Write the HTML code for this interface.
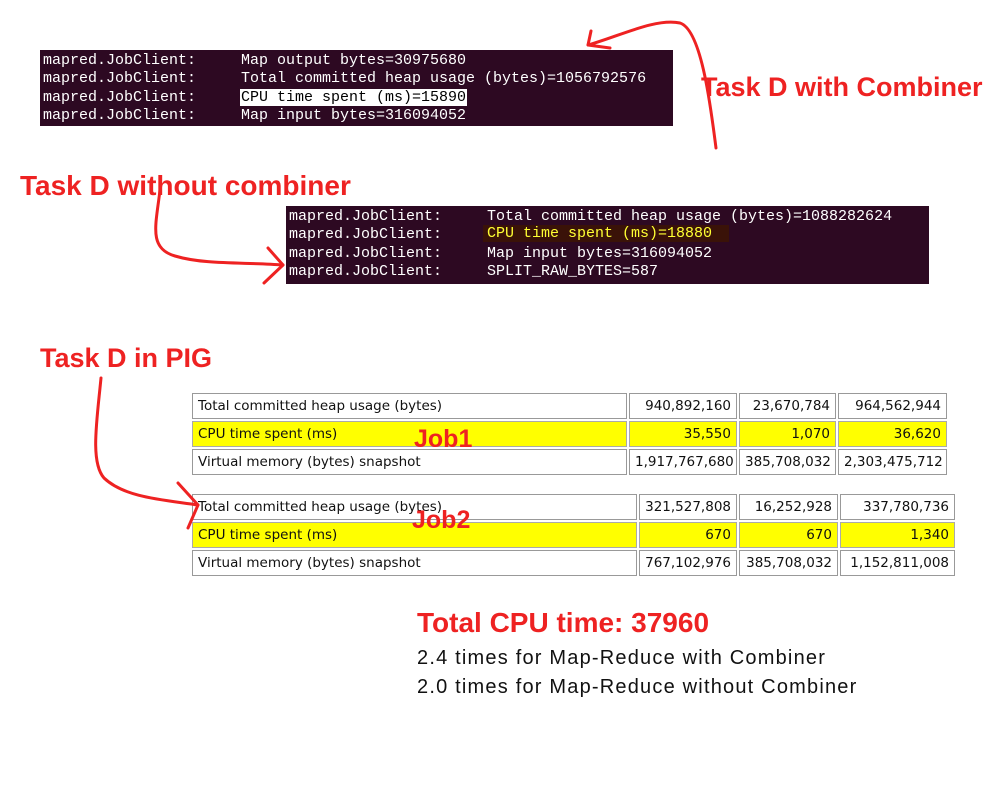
<!DOCTYPE html>
<html><head><meta charset="utf-8"><style>
body{margin:0;width:1000px;height:800px;background:#fff;position:relative;overflow:hidden;font-family:"Liberation Sans",sans-serif}
.term{position:absolute;background:#2d0922;font-family:"Liberation Mono",monospace;font-size:15px;color:#fff}
.term div{position:absolute;white-space:pre;line-height:17px}
.red{position:absolute;color:#ee2222;font-weight:bold;white-space:nowrap;font-family:"Liberation Sans",sans-serif}
table{position:absolute;border-collapse:separate;border-spacing:2px;font-size:13.5px;font-family:"DejaVu Sans","Liberation Sans",sans-serif;table-layout:fixed}
td{border:1px solid #999;padding:0 5px;height:24px;color:#111;white-space:nowrap}
td.n{text-align:right}
tr.y td{background:#ffff00;border-color:#aaa}
.blk{position:absolute;font-size:20px;letter-spacing:1.2px;color:#111;white-space:nowrap}
</style></head><body>
<div class="term" style="left:40px;top:50px;width:633px;height:76px">
<div style="left:3px;top:2px">mapred.JobClient:</div><div style="left:241px;top:2px;left:201px">Map output bytes=30975680</div>
<div style="left:3px;top:20px">mapred.JobClient:</div><div style="left:201px;top:20px">Total committed heap usage (bytes)=1056792576</div>
<div style="left:3px;top:39px">mapred.JobClient:</div><div style="left:200px;top:39px;background:#fff;color:#000;padding:0 1px">CPU time spent (ms)=15890</div>
<div style="left:3px;top:57px">mapred.JobClient:</div><div style="left:201px;top:57px">Map input bytes=316094052</div>
</div>
<div class="term" style="left:286px;top:206px;width:643px;height:78px">
<div style="left:3px;top:2px">mapred.JobClient:</div><div style="left:201px;top:2px">Total committed heap usage (bytes)=1088282624</div>
<div style="left:3px;top:20px">mapred.JobClient:</div><div style="left:197px;top:19px;background:#3a1208;color:#ffff33;padding:0 4px;width:238px">CPU time spent (ms)=18880</div>
<div style="left:3px;top:39px">mapred.JobClient:</div><div style="left:201px;top:39px">Map input bytes=316094052</div>
<div style="left:3px;top:57px">mapred.JobClient:</div><div style="left:201px;top:57px">SPLIT_RAW_BYTES=587</div>
</div>
<div class="red" style="left:701px;top:72px;font-size:27px">Task D with Combiner</div>
<div class="red" style="left:20px;top:170px;font-size:28px">Task D without combiner</div>
<div class="red" style="left:40px;top:343px;font-size:27px">Task D in PIG</div>
<table style="left:190px;top:391px;width:759px">
<colgroup><col><col style="width:108px"><col style="width:97px"><col style="width:109px"></colgroup>
<tr><td>Total committed heap usage (bytes)</td><td class="n">940,892,160</td><td class="n">23,670,784</td><td class="n">964,562,944</td></tr>
<tr class="y"><td>CPU time spent (ms)</td><td class="n">35,550</td><td class="n">1,070</td><td class="n">36,620</td></tr>
<tr><td>Virtual memory (bytes) snapshot</td><td class="n">1,917,767,680</td><td class="n">385,708,032</td><td class="n">2,303,475,712</td></tr>
</table>
<table style="left:190px;top:492px;width:767px">
<colgroup><col><col style="width:98px"><col style="width:99px"><col style="width:115px"></colgroup>
<tr><td>Total committed heap usage (bytes)</td><td class="n">321,527,808</td><td class="n">16,252,928</td><td class="n">337,780,736</td></tr>
<tr class="y"><td>CPU time spent (ms)</td><td class="n">670</td><td class="n">670</td><td class="n">1,340</td></tr>
<tr><td>Virtual memory (bytes) snapshot</td><td class="n">767,102,976</td><td class="n">385,708,032</td><td class="n">1,152,811,008</td></tr>
</table>
<div class="red" style="left:414px;top:425px;font-size:25px">Job1</div>
<div class="red" style="left:412px;top:506px;font-size:25px">Job2</div>
<svg style="position:absolute;left:0;top:0" width="1000" height="800" fill="none" stroke="#ee2222" stroke-width="3" stroke-linecap="round">
<path d="M716,148 C711,110 702,30 680,23 C655,18 620,36 588,45"/>
<path d="M588,45 L591,31 M588,45 L610,48"/>
<path d="M160,190 C156,225 148,248 175,256 C205,265 245,262 283,265"/>
<path d="M283,265 L268,248 M283,265 L264,283"/>
<path d="M101,378 C97,420 90,462 104,478 C125,498 165,500 198,505"/>
<path d="M198,505 L178,483 M198,505 L188,528"/>
</svg>
<div class="red" style="left:417px;top:607px;font-size:28px">Total CPU time: 37960</div>
<div class="blk" style="left:417px;top:647px">2.4 times for Map-Reduce with Combiner</div>
<div class="blk" style="left:417px;top:676px">2.0 times for Map-Reduce without Combiner</div>
</body></html>
